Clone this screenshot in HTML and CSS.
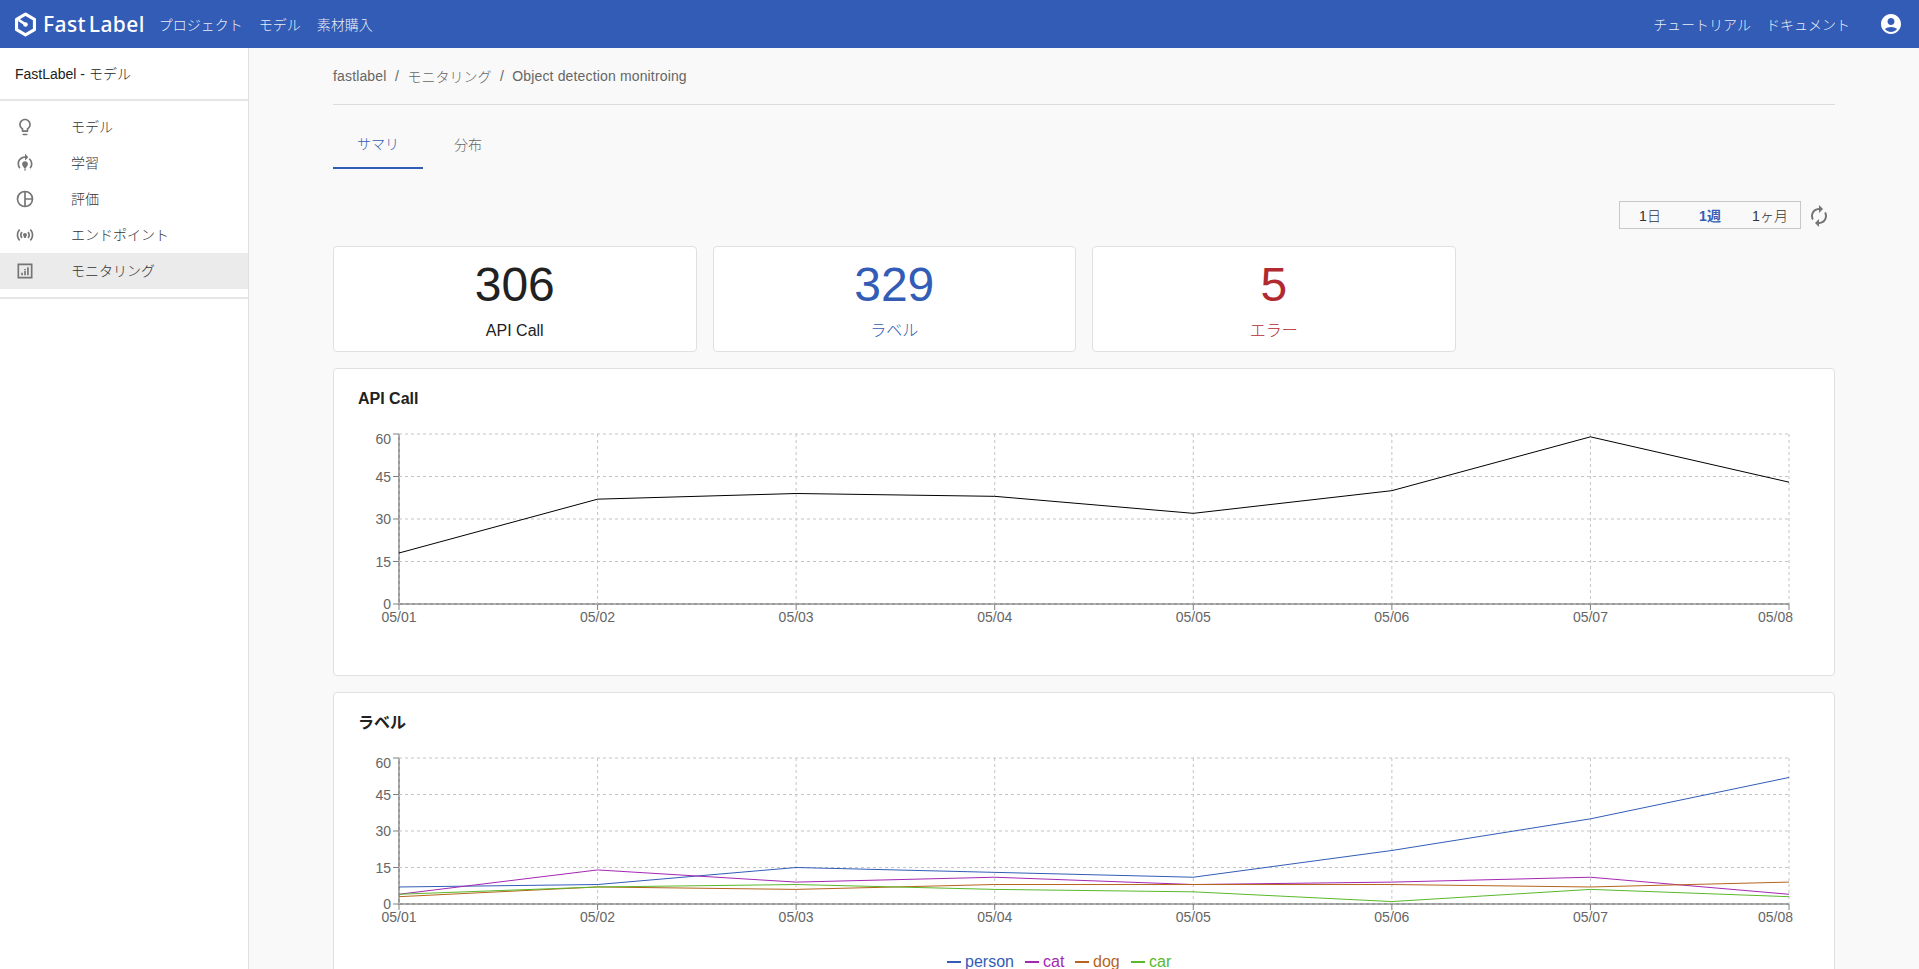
FILE: index.html
```html
<!DOCTYPE html>
<html lang="ja">
<head>
<meta charset="utf-8">
<title>FastLabel - モニタリング</title>
<link rel="stylesheet" href="styles.css">
</head>
<body>
<header class="topbar">
  <a class="logo">
    <svg class="logo-mark" viewBox="0 0 24 24"><polygon class="logo-hex" points="12,2 20.6,7 20.6,17 12,22 3.4,17 3.4,7"/><path class="logo-hand" d="M5.5 7.6 12 12"/><circle class="logo-dot" cx="12" cy="12" r="2.2"/></svg>
    <span class="logo-text">Fast Label</span>
  </a>
  <nav class="nav">
    <a>プロジェクト</a>
    <a>モデル</a>
    <a>素材購入</a>
  </nav>
  <nav class="nav nav-right">
    <a>チュートリアル</a>
    <a>ドキュメント</a>
  </nav>
  <svg class="account" viewBox="0 0 24 24"><path d="M12 2C6.48 2 2 6.48 2 12s4.48 10 10 10 10-4.48 10-10S17.52 2 12 2zm0 4c1.93 0 3.5 1.57 3.5 3.5S13.93 13 12 13s-3.5-1.57-3.5-3.5S10.07 6 12 6zm0 14c-2.03 0-4.43-.82-6.14-2.88C7.55 15.8 9.68 15 12 15s4.45.8 6.14 2.12C16.43 19.18 14.03 20 12 20z"/></svg>
</header>
<div class="layout">
  <aside class="sidebar">
    <div class="side-title">FastLabel - モデル</div>
    <ul class="side-list">
      <li class="side-item">
        <svg class="side-icon" viewBox="0 0 24 24"><path d="M9 21c0 .55.45 1 1 1h4c.55 0 1-.45 1-1v-1H9v1zm3-19C8.14 2 5 5.14 5 9c0 2.38 1.19 4.47 3 5.74V17c0 .55.45 1 1 1h6c.55 0 1-.45 1-1v-2.26c1.81-1.27 3-3.36 3-5.74 0-3.86-3.14-7-7-7zm2.85 11.1l-.85.6V16h-4v-2.3l-.85-.6C7.8 12.16 7 10.63 7 9c0-2.76 2.24-5 5-5s5 2.24 5 5c0 1.63-.8 3.16-2.15 4.1z"/></svg>
        <span>モデル</span>
      </li>
      <li class="side-item">
        <svg class="side-icon" viewBox="0 0 24 24"><path d="M15.5 13.5c0 2-2.5 3.5-2.5 5h-2c0-1.5-2.5-3-2.5-5 0-1.93 1.57-3.5 3.5-3.5s3.5 1.57 3.5 3.5zM13 19.5h-2V21h2v-1.5zM19 13c0 1.68-.59 3.21-1.58 4.42l1.42 1.42C20.18 17.27 21 15.23 21 13c0-2.74-1.23-5.19-3.16-6.84l-1.42 1.42C17.99 8.86 19 10.82 19 13zM16 5l-4-4v3c-4.97 0-9 4.03-9 9 0 2.23.82 4.27 2.16 5.84l1.42-1.42C5.59 16.21 5 14.68 5 13c0-3.86 3.14-7 7-7v3l4-4z"/></svg>
        <span>学習</span>
      </li>
      <li class="side-item">
        <svg class="side-icon" viewBox="0 0 24 24"><circle class="icon-line" cx="12" cy="12" r="9"/><path class="icon-line" d="M12 3v18M12 12h9"/></svg>
        <span>評価</span>
      </li>
      <li class="side-item">
        <svg class="side-icon" viewBox="0 0 24 24"><path d="M7.76 16.24C6.67 15.16 6 13.66 6 12s.67-3.16 1.76-4.24l1.42 1.42C8.45 9.9 8 10.9 8 12c0 1.1.45 2.1 1.17 2.83l-1.41 1.41zm8.48 0C17.33 15.16 18 13.66 18 12s-.67-3.16-1.76-4.24l-1.42 1.42C15.55 9.9 16 10.9 16 12c0 1.1-.45 2.1-1.17 2.83l1.41 1.41zM12 9.5c-1.3 0-2.4 1-2.4 2.3 0 1.2 1.2 2 1.5 3.7h1.8c.3-1.7 1.5-2.5 1.5-3.7 0-1.3-1.1-2.3-2.4-2.3zm8 2.5c0 2.21-.9 4.21-2.35 5.65l1.42 1.42C20.88 17.26 22 14.76 22 12s-1.12-5.26-2.93-7.07l-1.42 1.42C19.1 7.79 20 9.79 20 12zM6.35 6.35 4.93 4.93C3.12 6.74 2 9.24 2 12s1.12 5.26 2.93 7.07l1.42-1.42C4.9 16.21 4 14.21 4 12s.9-4.21 2.35-5.65z"/></svg>
        <span>エンドポイント</span>
      </li>
      <li class="side-item side-item-active">
        <svg class="side-icon" viewBox="0 0 24 24"><path d="M3 3h18v18H3V3zm2 2v14h14V5H5z"/><path d="M7.5 14h2v3h-2zM11 12h2v5h-2zM14.5 7.5h2V17h-2zM11 9.5h2V11h-2z"/></svg>
        <span>モニタリング</span>
      </li>
    </ul>
  </aside>
  <main class="main">
    <div class="breadcrumb">
      <a class="crumb-latin">fastlabel</a><span class="sep">/</span><a>モニタリング</a><span class="sep">/</span><a class="crumb-latin">Object detection monitroing</a>
    </div>
    <div class="tabs">
      <div class="tab tab-active">サマリ</div>
      <div class="tab">分布</div>
    </div>
    <div class="range-row">
      <div class="range">
        <button class="range-btn">1日</button>
        <button class="range-btn range-btn-active">1週</button>
        <button class="range-btn">1ヶ月</button>
      </div>
      <svg class="refresh" viewBox="0 0 24 24"><path d="M12 4V1L8 5l4 4V6c3.31 0 6 2.69 6 6 0 1.01-.25 1.97-.7 2.8l1.46 1.46C19.54 15.03 20 13.57 20 12c0-4.42-3.58-8-8-8zm0 14c-3.31 0-6-2.69-6-6 0-1.01.25-1.97.7-2.8L5.24 7.74C4.46 8.97 4 10.43 4 12c0 4.42 3.58 8 8 8v3l4-4-4-4v3z"/></svg>
    </div>
    <section class="stats">
      <div class="stat">
        <div class="stat-value">306</div>
        <div class="stat-label">API Call</div>
      </div>
      <div class="stat stat-blue">
        <div class="stat-value">329</div>
        <div class="stat-label">ラベル</div>
      </div>
      <div class="stat stat-red">
        <div class="stat-value">5</div>
        <div class="stat-label">エラー</div>
      </div>
    </section>
    <section class="card">
      <h2 class="card-title">API Call</h2>
      <svg class="chart chart-api" viewBox="0 0 1452 230">
        <path class="axis" d="M41 13V183H1431"/>
        <g class="grid">
          <path d="M41 13H1431M41 55.5H1431M41 98H1431M41 140.5H1431"/>
          <path d="M239.57 13V183M438.14 13V183M636.71 13V183M835.29 13V183M1033.86 13V183M1232.43 13V183M1431 13V183"/>
          <path d="M41 13V183H1431"/>
        </g>
        <path class="tick" d="M35 13H41M35 55.5H41M35 98H41M35 140.5H41M35 183H41M41 183V189M239.57 183V189M438.14 183V189M636.71 183V189M835.29 183V189M1033.86 183V189M1232.43 183V189M1431 183V189"/>
        <g class="tick-label tick-y">
          <text x="33" y="23">60</text>
          <text x="33" y="60.5">45</text>
          <text x="33" y="103">30</text>
          <text x="33" y="145.5">15</text>
          <text x="33" y="188">0</text>
        </g>
        <g class="tick-label tick-x">
          <text x="41" y="201">05/01</text>
          <text x="239.57" y="201">05/02</text>
          <text x="438.14" y="201">05/03</text>
          <text x="636.71" y="201">05/04</text>
          <text x="835.29" y="201">05/05</text>
          <text x="1033.86" y="201">05/06</text>
          <text x="1232.43" y="201">05/07</text>
          <text class="tick-end" x="1435" y="201">05/08</text>
        </g>
        <polyline class="series series-black" points="41,132 239.57,78.17 438.14,72.5 636.71,75.33 835.29,92.33 1033.86,69.67 1232.43,15.83 1431,61.17"/>
      </svg>
    </section>
    <section class="card">
      <h2 class="card-title">ラベル</h2>
      <svg class="chart chart-label" viewBox="0 0 1452 240">
        <path class="axis" d="M41 13V159H1431"/>
        <g class="grid">
          <path d="M41 13H1431M41 49.5H1431M41 86H1431M41 122.5H1431"/>
          <path d="M239.57 13V159M438.14 13V159M636.71 13V159M835.29 13V159M1033.86 13V159M1232.43 13V159M1431 13V159"/>
          <path d="M41 13V159H1431"/>
        </g>
        <path class="tick" d="M35 13H41M35 49.5H41M35 86H41M35 122.5H41M35 159H41M41 159V165M239.57 159V165M438.14 159V165M636.71 159V165M835.29 159V165M1033.86 159V165M1232.43 159V165M1431 159V165"/>
        <g class="tick-label tick-y">
          <text x="33" y="23">60</text>
          <text x="33" y="54.5">45</text>
          <text x="33" y="91">30</text>
          <text x="33" y="127.5">15</text>
          <text x="33" y="164">0</text>
        </g>
        <g class="tick-label tick-x">
          <text x="41" y="177">05/01</text>
          <text x="239.57" y="177">05/02</text>
          <text x="438.14" y="177">05/03</text>
          <text x="636.71" y="177">05/04</text>
          <text x="835.29" y="177">05/05</text>
          <text x="1033.86" y="177">05/06</text>
          <text x="1232.43" y="177">05/07</text>
          <text class="tick-end" x="1435" y="177">05/08</text>
        </g>
        <polyline class="series series-person" points="41,141.97 239.57,139.53 438.14,122.5 636.71,127.37 835.29,132.23 1033.86,105.47 1232.43,73.83 1431,32.47"/>
        <polyline class="series series-cat" points="41,149.27 239.57,124.93 438.14,137.1 636.71,132.23 835.29,139.53 1033.86,137.1 1232.43,132.23 1431,149.27"/>
        <polyline class="series series-dog" points="41,151.7 239.57,141.97 438.14,144.4 636.71,139.53 835.29,139.53 1033.86,139.53 1232.43,141.97 1431,137.1"/>
        <polyline class="series series-car" points="41,149.27 239.57,141.97 438.14,139.53 636.71,144.4 835.29,146.83 1033.86,156.57 1232.43,144.4 1431,151.7"/>
        <g class="legend">
          <path class="legend-line series-person" d="M589 217H603"/>
          <text class="legend-person" x="607" y="222">person</text>
          <path class="legend-line series-cat" d="M667 217H681"/>
          <text class="legend-cat" x="685" y="222">cat</text>
          <path class="legend-line series-dog" d="M717 217H731"/>
          <text class="legend-dog" x="735" y="222">dog</text>
          <path class="legend-line series-car" d="M773 217H787"/>
          <text class="legend-car" x="791" y="222">car</text>
        </g>
      </svg>
    </section>
  </main>
</div>
</body>
</html>
```
FILE: styles.css
```css
* { box-sizing: border-box; }
html, body { height: 100%; }
body {
  margin: 0;
  overflow: hidden;
  background: #f9f9f9;
  color: #212121;
  font-family: "Liberation Sans", "Noto Sans CJK JP", sans-serif;
  font-size: 14px;
  font-weight: 300;
}
ul { list-style: none; margin: 0; padding: 0; }

.topbar {
  height: 48px;
  background: #325cb6;
  display: flex;
  align-items: center;
  padding: 0 16px 0 13px;
  color: #fff;
}
.logo { display: flex; align-items: center; gap: 5px; margin-right: 14px; }
.logo-mark { width: 25px; height: 25px; }
.logo-hex { fill: none; stroke: #fff; stroke-width: 3; stroke-linejoin: round; }
.logo-hand { stroke: #fff; stroke-width: 2.6; }
.logo-dot { fill: #fff; }
.logo-text {
  font-family: "Noto Sans", sans-serif;
  font-weight: 500;
  font-size: 21px;
  letter-spacing: 0.4px;
  word-spacing: -3px;
  line-height: 1;
}
.nav { display: flex; gap: 16px; color: rgba(255, 255, 255, 0.92); }
.nav-right { margin-left: auto; margin-right: 29px; gap: 15px; }
.account { width: 24px; height: 24px; fill: #fff; }

.layout { display: flex; height: calc(100vh - 48px); }
.sidebar {
  width: 249px;
  flex: none;
  background: #fff;
  border-right: 1px solid #e0e0e0;
}
.side-title {
  height: 53px;
  padding: 0 15px 2px;
  display: flex;
  align-items: center;
  border-bottom: 2px solid #e5e5e5;
  color: #212121;
}
.side-list {
  padding: 8px 0;
  border-bottom: 2px solid #e5e5e5;
}
.side-item {
  height: 36px;
  display: flex;
  align-items: center;
  padding-left: 15px;
  color: #333;
}
.side-item span { margin-bottom: 2px; }
.side-item-active { background: #ebebeb; }
.side-icon { width: 20px; height: 20px; margin-right: 36px; fill: #757575; flex: none; }
.icon-line { fill: none; stroke: #757575; stroke-width: 2; }

.main { flex: 1; min-width: 0; padding: 0 84px; overflow: hidden; }
.breadcrumb {
  height: 57px;
  display: flex;
  align-items: center;
  padding-bottom: 1px;
  border-bottom: 1px solid #dcdcdc;
  color: #666;
}
.crumb-latin { letter-spacing: 0.15px; }
.sep { margin: 0 8.5px; }
.tabs { display: flex; margin-top: 15px; height: 49px; }
.tab {
  width: 90px;
  display: flex;
  align-items: center;
  justify-content: center;
  color: #666;
  padding-bottom: 2px;
}
.tab-active { color: #325cb6; border-bottom: 2px solid #325cb6; }

.range-row {
  display: flex;
  justify-content: flex-end;
  align-items: center;
  height: 28px;
  margin-top: 32px;
  padding-right: 4px;
}
.range {
  display: flex;
  height: 28px;
  border: 1px solid #c8c8c8;
}
.range-btn {
  width: 60px;
  padding: 0;
  border: 0;
  background: transparent;
  font: inherit;
  color: #333;
}
.range-btn-active { color: #325cb6; font-weight: 700; }
.refresh { width: 24px; height: 24px; margin: 2px 0 0 6px; fill: #757575; transform: scaleX(-1); }

.stats {
  display: grid;
  grid-template-columns: repeat(4, 1fr);
  gap: 16px;
  margin-top: 17px;
}
.stat {
  height: 106px;
  background: #fff;
  border: 1px solid #e0e0e0;
  border-radius: 4px;
  text-align: center;
  color: #212121;
}
.stat-value { font-size: 48px; line-height: 56px; margin-top: 10px; }
.stat-label { font-size: 16px; line-height: 20px; margin-top: 8px; }
.stat-blue { color: #325cb6; }
.stat-red { color: #b12a2f; }

.card {
  margin-top: 16px;
  padding: 20px 24px 24px;
  background: #fff;
  border: 1px solid #e0e0e0;
  border-radius: 4px;
}
.card-title {
  margin: 0 0 12px;
  font-size: 16px;
  line-height: 20px;
  font-weight: 700;
  color: #212121;
}
.chart { display: block; width: 100%; }
.chart-api { height: 230px; }
.chart-label { height: 240px; }
.axis { fill: none; stroke: #9a9a9a; stroke-width: 2; }
.grid path { fill: none; stroke: #c4c4c4; stroke-width: 1; stroke-dasharray: 3 3; }
.tick { fill: none; stroke: #808080; stroke-width: 1; }
.tick-label text { font-size: 14px; fill: #666; }
.tick-y text { text-anchor: end; }
.tick-x text { text-anchor: middle; }
.tick-x .tick-end { text-anchor: end; }
.series { fill: none; stroke-width: 1; }
.series-black { stroke: #000; }
.series-person { stroke: #325cb6; }
.series-cat { stroke: #a427b3; }
.series-dog { stroke: #b5651d; }
.series-car { stroke: #5ab82a; }
.legend text { font-size: 16px; }
.legend-line { fill: none; stroke-width: 2; }
.legend-person { fill: #325cb6; }
.legend-cat { fill: #a427b3; }
.legend-dog { fill: #b5651d; }
.legend-car { fill: #5ab82a; }
```
